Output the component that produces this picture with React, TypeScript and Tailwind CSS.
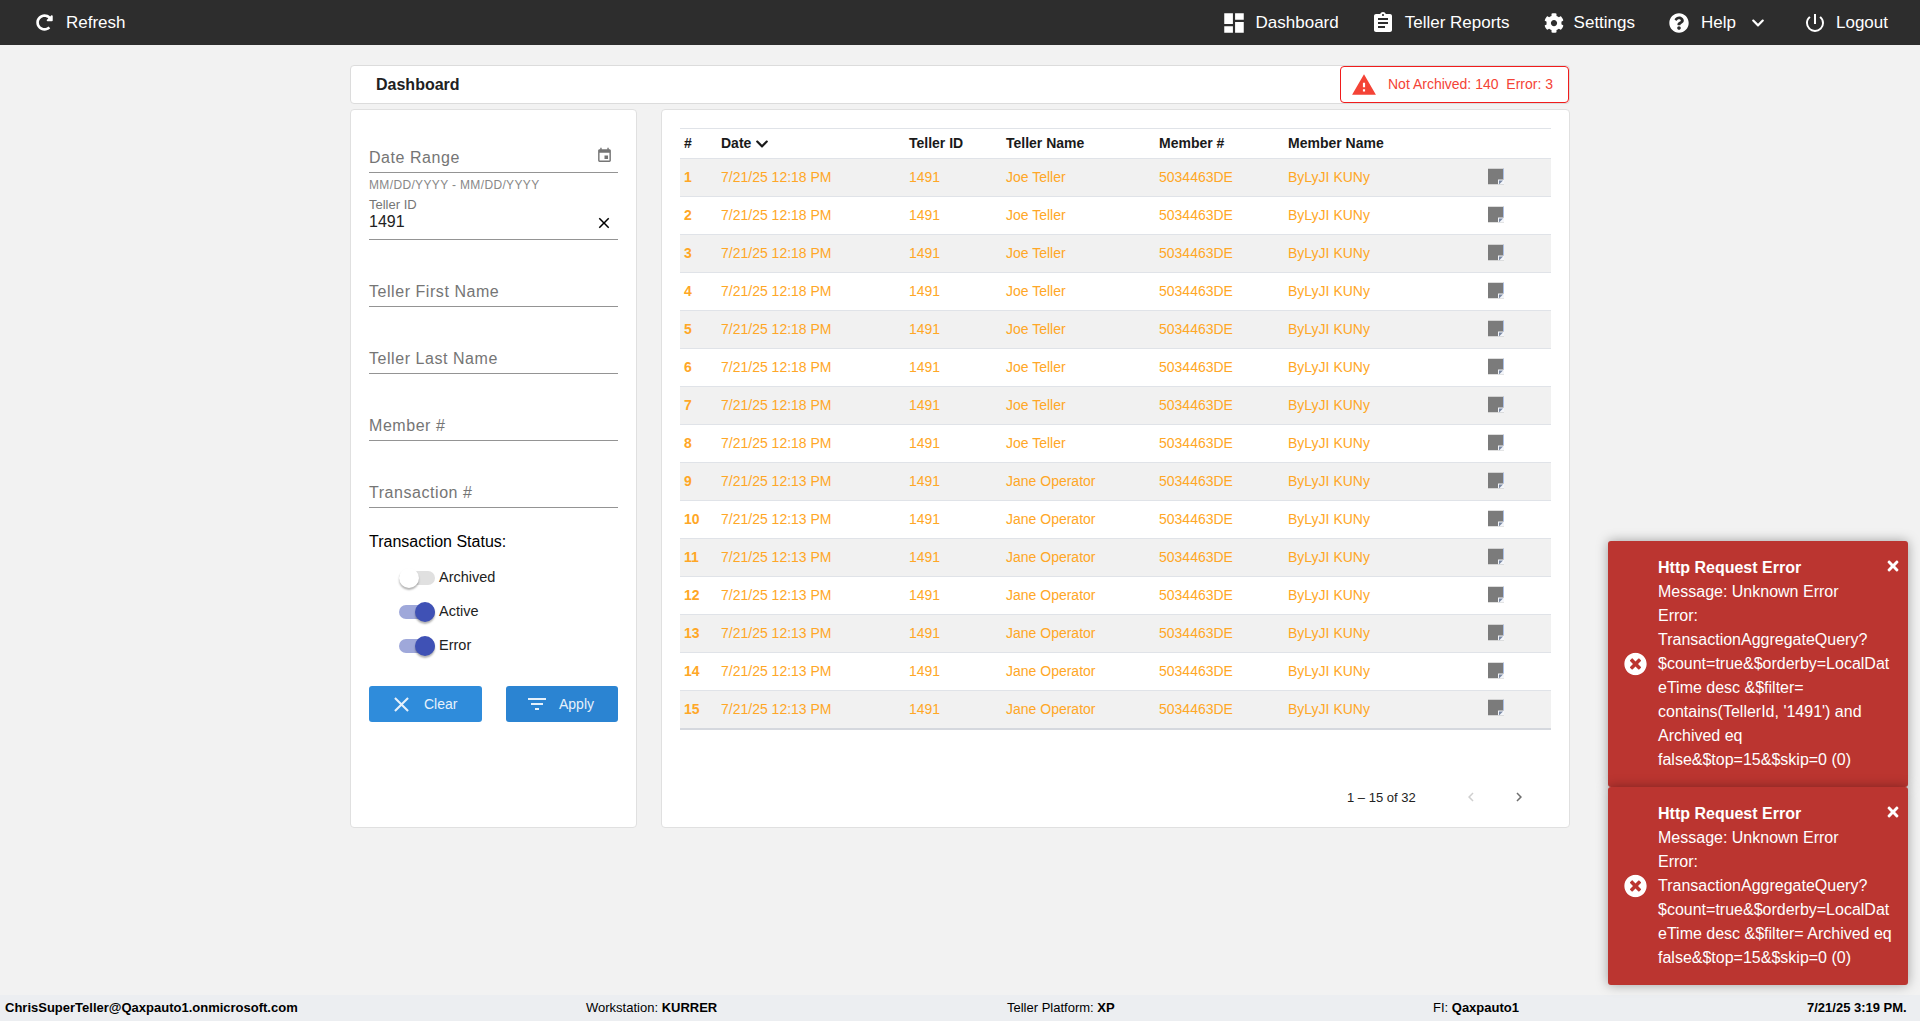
import React from "react";
import {
  MdAssignment,
  MdClose,
  MdDashboard,
  MdEvent,
  MdFilterList,
  MdPowerSettingsNew,
  MdWarning,
  MdChevronLeft,
  MdChevronRight,
} from "react-icons/md";
import { FaChevronDown, FaCog, FaQuestionCircle, FaRedoAlt, FaTimes, FaTimesCircle } from "react-icons/fa";

const rows = Array.from({ length: 15 }, (_, i) => ({
  id: i + 1,
  date: i < 8 ? "7/21/25 12:18 PM" : "7/21/25 12:13 PM",
  tellerId: "1491",
  tellerName: i < 8 ? "Joe Teller" : "Jane Operator",
  member: "5034463DE",
  memberName: "ByLyJI KUNy",
}));

function NoteIcon() {
  return (
    <svg width="16" height="16" viewBox="0 0 16 16" className="ml-[1px] -translate-y-[1.5px]">
      <path d="M0 0h16v16H0z" fill="#7b7b7b" />
      <path d="M15 0h1v11h-1z" fill="#a9bfe6" />
      <path d="M16 11v5h-6v-5z" fill="#f4f6fa" />
      <path d="M11 16v-4h4z" fill="#7b8aa5" />
    </svg>
  );
}

function NavItem({ icon, label, className }: { icon: React.ReactNode; label: string; className?: string }) {
  return (
    <div className={"flex items-center " + (className ?? "")}>
      {icon}
      <span className="text-[17px]">{label}</span>
    </div>
  );
}

function TextField({ label }: { label: string }) {
  return (
    <div className="h-[67px] flex flex-col justify-end">
      <div className="border-b border-[#949494] h-[28px] text-[16px] leading-[25px] text-[#757575] tracking-[0.55px]">
        {label}
      </div>
    </div>
  );
}

function Toggle({ label, on }: { label: string; on: boolean }) {
  return (
    <div className="h-[34px] flex items-center pl-[30px]">
      <div className={"relative w-[36px] h-[14px] rounded-full " + (on ? "bg-[#9fa8da]" : "bg-[#e0e0e0]")}>
        <div
          className={
            "absolute top-[-3px] w-[20px] h-[20px] rounded-full shadow-[0_2px_2px_rgba(0,0,0,0.3)] " +
            (on ? "right-0 bg-[#3f51b5]" : "left-0 bg-white")
          }
        />
      </div>
      <span className="ml-[4px] text-[14.5px] text-[#222]">{label}</span>
    </div>
  );
}

function Toast({ lines }: { lines: string }) {
  return (
    <div className="relative w-[300px] bg-[#bb3530] text-white rounded-[3px] pt-[15px] pr-[15px] pb-[15px] pl-[50px] text-[16px] leading-[24px] break-words shadow-[0_0_12px_rgba(0,0,0,0.35)]">
      <FaTimesCircle className="absolute left-[16px] top-1/2 -translate-y-1/2 text-[23px]" />
      <FaTimes className="absolute right-[7px] top-[17px] text-[16px]" />
      <div className="font-bold">Http Request Error</div>
      <div>Message: Unknown Error</div>
      <div>Error: {lines}</div>
    </div>
  );
}

export default function App() {
  return (
    <div className="relative h-screen flex flex-col bg-[#f2f2f2] font-['Liberation_Sans',Arial,sans-serif] overflow-hidden">
      <header className="h-[45px] shrink-0 bg-[#2d2d2d] text-white flex items-center pl-[36px] pr-[32px]">
        <NavItem icon={<FaRedoAlt className="text-[17px] mr-[13px]" />} label="Refresh" />
        <div className="ml-auto flex items-center">
          <NavItem icon={<MdDashboard className="text-[26px] mr-[9px]" />} label="Dashboard" />
          <NavItem className="ml-[32px]" icon={<MdAssignment className="text-[24px] mr-[10px]" />} label="Teller Reports" />
          <NavItem className="ml-[34px]" icon={<FaCog className="text-[20px] mr-[10px]" />} label="Settings" />
          <NavItem className="ml-[34px]" icon={<FaQuestionCircle className="text-[20px] mr-[12px]" />} label="Help" />
          <FaChevronDown className="text-[14px] ml-[15px]" />
          <NavItem className="ml-[38px]" icon={<MdPowerSettingsNew className="text-[24px] mr-[9px]" />} label="Logout" />
        </div>
      </header>

      <main className="flex-1 w-[1220px] mx-auto pt-[20px]">
        <div className="h-[39px] bg-white border border-[#dcdcdc] rounded-[4px] flex items-center justify-between pl-[25px]">
          <div className="text-[16px] font-bold text-[#212121]">Dashboard</div>
          <div className="h-[37px] w-[229px] border-[1.5px] border-[#f01c1c] rounded-[4px] flex items-center pl-[10px] text-[14px] text-[#f44336]">
            <MdWarning className="text-[26px] mr-[11px]" />
            <span className="whitespace-pre">Not Archived: 140  Error: 3</span>
          </div>
        </div>

        <div className="mt-[5px] flex items-start gap-[24px]">
          <aside className="w-[287px] h-[719px] bg-white border border-[#e0e0e0] rounded-[4px] px-[18px]">
            <div className="h-[63px] flex flex-col justify-end">
              <div className="border-b border-[#949494] h-[28px] flex justify-between text-[16px] leading-[25px] text-[#757575] tracking-[0.55px]">
                Date Range
                <MdEvent className="text-[17px] mr-[5px] mt-[2px]" />
              </div>
            </div>
            <div className="text-[12px] leading-[14px] mt-[5px] text-[#888] tracking-[0.35px]">MM/DD/YYYY - MM/DD/YYYY</div>
            <div className="text-[13px] leading-[14px] mt-[6px] text-[#757575]">Teller ID</div>
            <div className="h-[28px] pt-[1px] border-b border-[#949494] flex justify-between text-[16px] leading-[18px] text-[#222]">
              1491
              <MdClose className="text-[18px] text-black mr-[5px] mt-[1px]" />
            </div>
            <TextField label="Teller First Name" />
            <TextField label="Teller Last Name" />
            <TextField label="Member #" />
            <TextField label="Transaction #" />
            <div className="mt-[24px] text-[16px] leading-[20px] text-black">Transaction Status:</div>
            <div className="mt-[9px]">
              <Toggle label="Archived" on={false} />
              <Toggle label="Active" on />
              <Toggle label="Error" on />
            </div>
            <div className="mt-[23px] flex justify-between">
              <button className="w-[113px] h-[36px] rounded-[3px] bg-[#2f8cdb] text-[#e6f1fb] text-[14px] flex items-center pl-[20px]">
                <MdClose className="text-[25px] mr-[10px]" />
                Clear
              </button>
              <button className="w-[112px] h-[36px] rounded-[3px] bg-[#2b84d2] text-[#e6f1fb] text-[14px] flex items-center pl-[19px]">
                <MdFilterList className="text-[24px] mr-[10px]" />
                Apply
              </button>
            </div>
          </aside>

          <section className="w-[909px] h-[719px] bg-white border border-[#e0e0e0] rounded-[4px] px-[18px] pt-[18px]">
            <table className="w-full table-fixed border-collapse text-[14px]">
              <thead>
                <tr className="h-[30px] border-t border-b border-[#e0e3e8] text-left font-bold text-[#1a1a1a]">
                  <th className="w-[41px] pl-[4px]">#</th>
                  <th className="w-[188px]">
                    <span className="inline-flex items-center">
                      Date
                      <FaChevronDown className="text-[14px] ml-[4px]" />
                    </span>
                  </th>
                  <th className="w-[97px]">Teller ID</th>
                  <th className="w-[153px]">Teller Name</th>
                  <th className="w-[129px]">Member #</th>
                  <th className="w-[199px]">Member Name</th>
                  <th></th>
                </tr>
              </thead>
              <tbody className="text-[#ffa726]">
                {rows.map((r) => (
                  <tr key={r.id} className="h-[38px] border-b border-[#e0e3e8] odd:bg-[#f1f1f1] last:border-b-2 last:border-[#d5d8de]">
                    <td className="pl-[4px] font-bold">{r.id}</td>
                    <td>{r.date}</td>
                    <td>{r.tellerId}</td>
                    <td>{r.tellerName}</td>
                    <td>{r.member}</td>
                    <td>{r.memberName}</td>
                    <td>
                      <NoteIcon />
                    </td>
                  </tr>
                ))}
              </tbody>
            </table>
            <div className="mt-[58px] flex items-center text-[13px] text-[#222] pl-[667px]">
              1 – 15 of 32
              <MdChevronLeft className="text-[18px] text-[#cfcfcf] ml-[46px]" />
              <MdChevronRight className="text-[18px] text-[#6f6f6f] ml-[30px]" />
            </div>
          </section>
        </div>
      </main>

      <footer className="h-[26px] shrink-0 bg-[#eceef1] flex items-center text-[13px] text-black">
        <div className="w-[586px] pl-[5px] font-bold">ChrisSuperTeller@Qaxpauto1.onmicrosoft.com</div>
        <div className="w-[421px]">Workstation: <b>KURRER</b></div>
        <div className="w-[426px]">Teller Platform: <b>XP</b></div>
        <div className="w-[374px]">FI: <b>Qaxpauto1</b></div>
        <div className="font-bold">7/21/25 3:19 PM.</div>
      </footer>

      <div className="absolute right-[12px] bottom-[36px] flex flex-col">
        <Toast lines="TransactionAggregateQuery?$count=true&$orderby=LocalDateTime desc &$filter= contains(TellerId, '1491') and Archived eq false&$top=15&$skip=0 (0)" />
        <Toast lines="TransactionAggregateQuery?$count=true&$orderby=LocalDateTime desc &$filter= Archived eq false&$top=15&$skip=0 (0)" />
      </div>
    </div>
  );
}
